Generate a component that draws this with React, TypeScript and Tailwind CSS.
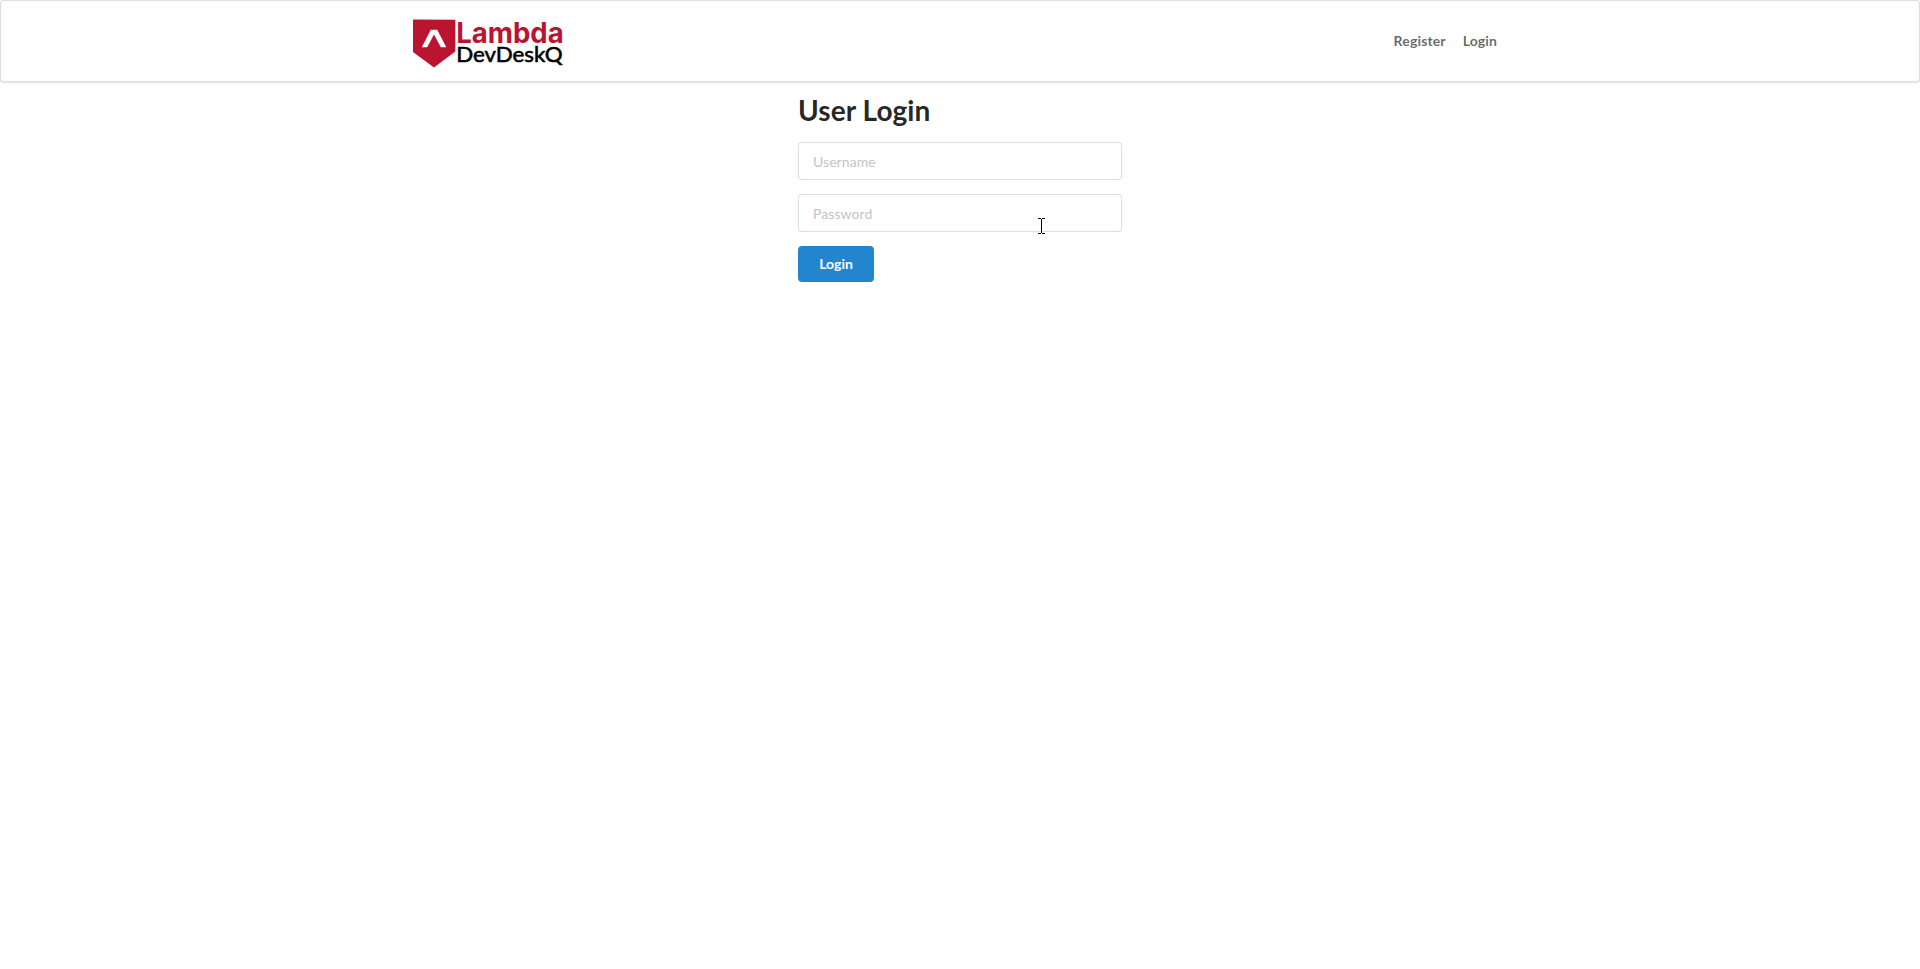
function Logo() {
  return (
    <div className="flex">
      <svg width="44" height="52" viewBox="0 0 44 52" role="img" aria-label="Lambda" className="block">
        <path d="M1 3.5 L43.3 3.8 V35.5 L22 51.5 L1 36 Z" fill="#ba1530" />
        <path d="M9.8 31.3 L18.8 13.8 H25.2 L34.3 31.3 H28.8 L22 18.6 L15.2 31.3 Z" fill="#fff" />
      </svg>
      <svg width="112" height="52" viewBox="0 0 112 52" className="block overflow-visible">
        <text x="0.2" y="26.5" fontFamily="Inter" fontWeight="700" fontSize="28" textLength="107.5" lengthAdjust="spacingAndGlyphs" fill="#ba1530">
          Lambda
        </text>
        <text x="0.2" y="45.5" fontFamily="Lato" fontWeight="400" fontSize="22" textLength="106.5" lengthAdjust="spacingAndGlyphs" fill="#000" stroke="#000" strokeWidth="0.6">
          DevDeskQ
        </text>
      </svg>
    </div>
  );
}

function IBeam() {
  return (
    <svg width="7" height="16" viewBox="0 0 7 16" shapeRendering="crispEdges" className="pointer-events-none absolute left-[240px] top-[24px]" aria-hidden="true">
      <path d="M0 0h3v1H0zM4 0h3v1H4zM3 1h1v14H3zM0 15h3v1H0zM4 15h3v1H4z" fill="#000" />
    </svg>
  );
}

const field =
  "block h-[38px] w-full rounded border border-[rgba(34,36,38,0.15)] bg-white px-[14px] text-[14px] leading-[17px] tracking-[0.07px] text-[rgba(0,0,0,0.87)] outline-none placeholder:text-[#c4c4c4]";

export default function App() {
  return (
    <div className="min-h-screen bg-white font-['Lato',sans-serif] text-[14px] text-[rgba(0,0,0,0.87)]">
      <header className="h-[82px] rounded border border-[rgba(34,36,38,0.15)] bg-white shadow-[0_1px_2px_0_rgba(34,36,38,0.15)]">
        <div className="mx-auto flex h-[80px] w-[1096px] items-start justify-between">
          <div className="pt-[15px]">
            <Logo />
          </div>
          <nav className="flex gap-[17px] pr-[11px] pt-[30px] font-bold leading-5 text-[rgba(0,0,0,0.6)]">
            <a href="#register" className="tracking-[0.15px]">Register</a>
            <a href="#login" className="tracking-[0.1px]">Login</a>
          </nav>
        </div>
      </header>
      <main className="mx-auto w-[324px]">
        <h1 className="pt-[10px] text-[28px] font-bold leading-9 tracking-[0.08px]">User Login</h1>
        <form className="flex flex-col items-start gap-[14px] pt-[14px]">
          <input className={field} placeholder="Username" />
          <div className="relative w-full">
            <input className={field} type="password" placeholder="Password" />
            <IBeam />
          </div>
          <button type="button" className="h-9 w-[76px] rounded bg-[#2185d0] text-[14px] font-bold leading-[14px] text-white">
            Login
          </button>
        </form>
      </main>
    </div>
  );
}
